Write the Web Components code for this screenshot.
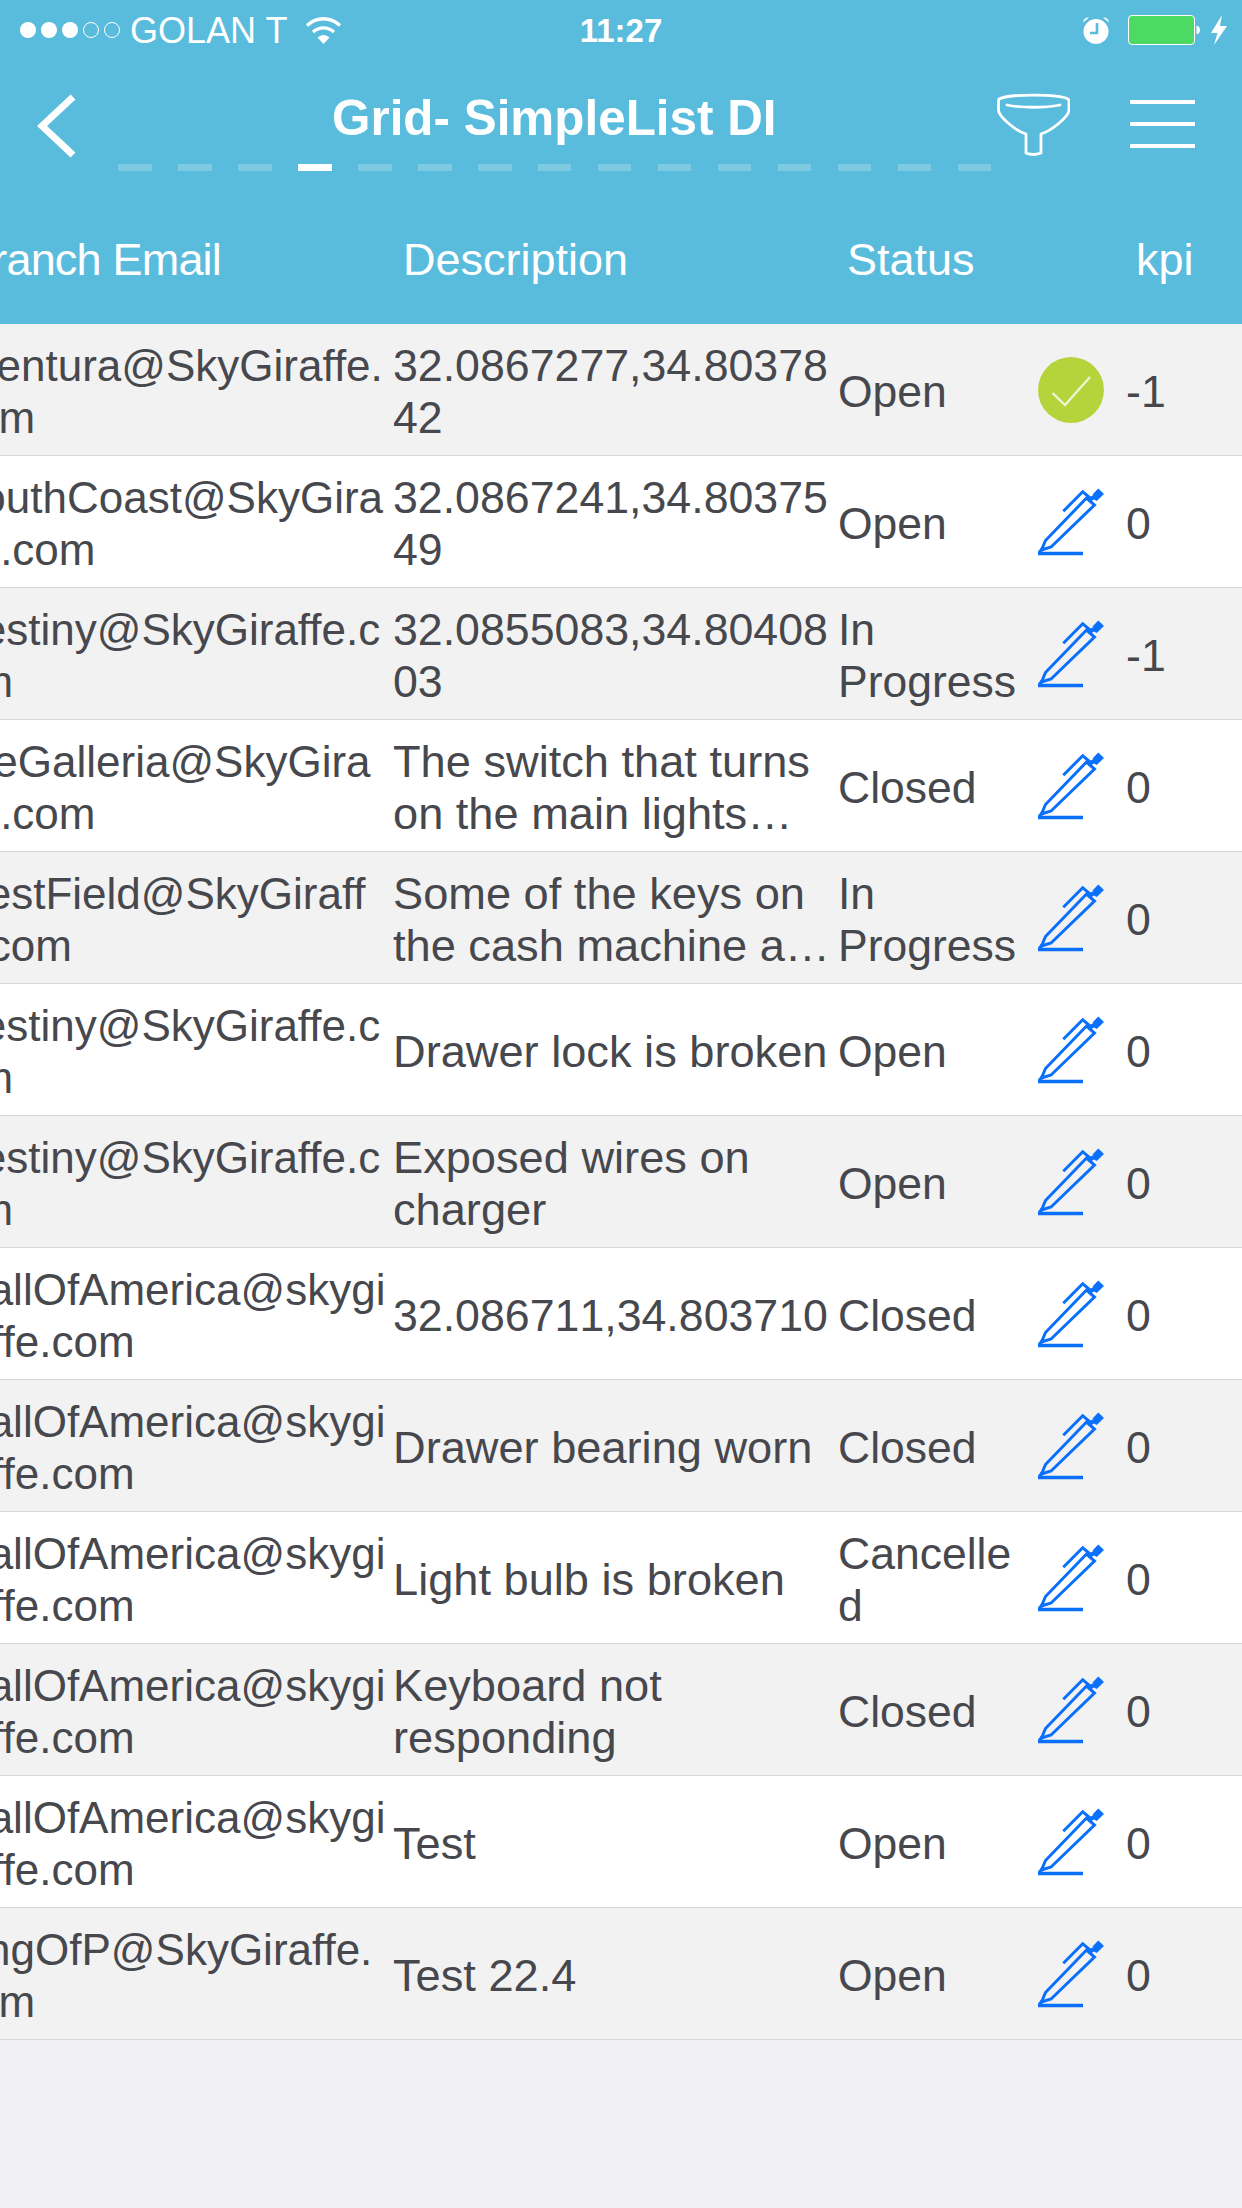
<!DOCTYPE html>
<html>
<head>
<meta charset="utf-8">
<title>Grid- SimpleList DI</title>
<style>
  html, body { margin: 0; padding: 0; background: #efeff4; }
  body { width: 1242px; height: 2208px; overflow: hidden; font-family: "Liberation Sans", Arial, sans-serif; }
  .num { font-size: 44.7px; font-kerning: none; }
</style>
</head>
<body>
<grid-screen>
  <status-bar></status-bar>
  <nav-bar title="Grid- SimpleList DI"></nav-bar>
  <page-dashes count="15" active="3"></page-dashes>
  <grid-head></grid-head>

  <grid-row kpi="-1" done>
    <span slot="email" style="margin-left:-6px">Aventura@SkyGiraffe.<br>com</span>
    <span slot="desc" class="num">32.0867277,34.80378<br>42</span>
    <span slot="status">Open</span>
  </grid-row>
  <grid-row kpi="0">
    <span slot="email">SouthCoast@SkyGira<br>ffe.com</span>
    <span slot="desc" class="num">32.0867241,34.80375<br>49</span>
    <span slot="status">Open</span>
  </grid-row>
  <grid-row kpi="-1">
    <span slot="email" style="margin-left:-2px">Destiny@SkyGiraffe.c<br>om</span>
    <span slot="desc" class="num">32.0855083,34.80408<br>03</span>
    <span slot="status">In<br>Progress</span>
  </grid-row>
  <grid-row kpi="0">
    <span slot="email" style="margin-left:-10px">TheGalleria@SkyGira<br>ffe.com</span>
    <span slot="desc">The switch that turns<br>on the main lights…</span>
    <span slot="status">Closed</span>
  </grid-row>
  <grid-row kpi="0">
    <span slot="email" style="margin-left:-6px">WestField@SkyGiraff<br>e.com</span>
    <span slot="desc">Some of the keys on<br>the cash machine a…</span>
    <span slot="status">In<br>Progress</span>
  </grid-row>
  <grid-row kpi="0">
    <span slot="email" style="margin-left:-2px">Destiny@SkyGiraffe.c<br>om</span>
    <span slot="desc">Drawer lock is broken</span>
    <span slot="status">Open</span>
  </grid-row>
  <grid-row kpi="0">
    <span slot="email" style="margin-left:-2px">Destiny@SkyGiraffe.c<br>om</span>
    <span slot="desc">Exposed wires on<br>charger</span>
    <span slot="status">Open</span>
  </grid-row>
  <grid-row kpi="0">
    <span slot="email">MallOfAmerica@skygi<br>raffe.com</span>
    <span slot="desc" class="num">32.086711,34.803710</span>
    <span slot="status">Closed</span>
  </grid-row>
  <grid-row kpi="0">
    <span slot="email">MallOfAmerica@skygi<br>raffe.com</span>
    <span slot="desc">Drawer bearing worn</span>
    <span slot="status">Closed</span>
  </grid-row>
  <grid-row kpi="0">
    <span slot="email">MallOfAmerica@skygi<br>raffe.com</span>
    <span slot="desc">Light bulb is broken</span>
    <span slot="status">Cancelle<br>d</span>
  </grid-row>
  <grid-row kpi="0">
    <span slot="email">MallOfAmerica@skygi<br>raffe.com</span>
    <span slot="desc">Keyboard not<br>responding</span>
    <span slot="status">Closed</span>
  </grid-row>
  <grid-row kpi="0">
    <span slot="email">MallOfAmerica@skygi<br>raffe.com</span>
    <span slot="desc">Test</span>
    <span slot="status">Open</span>
  </grid-row>
  <grid-row kpi="0">
    <span slot="email" style="margin-left:-5px">KingOfP@SkyGiraffe.<br>com</span>
    <span slot="desc">Test 22.4</span>
    <span slot="status">Open</span>
  </grid-row>
</grid-screen>

<script>
class GridScreen extends HTMLElement {
    constructor() {
        super();
        this.shadowDOM = this.attachShadow({mode: "open"});
    }

    connectedCallback(){
        this.shadowDOM.innerHTML = `
        <style>
        :host {
            display: flex;
            flex-direction: column;
            width: 1242px;
            height: 2208px;
            overflow: hidden;
            background-color: #efeff4;
            color: #47484d;
            font-family: "Liberation Sans", Arial, sans-serif;
        }
        </style>
        <slot></slot>
        `;
    }
}

class StatusBar extends HTMLElement {
    constructor() {
        super();
        this.shadowDOM = this.attachShadow({mode: "open"});
    }

    connectedCallback(){
        this.shadowDOM.innerHTML = `
        <style>
        :host {
            display: grid;
            grid-template-columns: 1fr auto 1fr;
            align-items: center;
            height: 60px;
            background-color: #5abcdc;
            color: white;
            font-size: 36px;
        }
        .left, .right { display: flex; align-items: center; }
        .left { padding-left: 20px; }
        .right { justify-content: flex-end; padding-right: 15px; }
        .dots { display: flex; gap: 5px; margin-right: 10px; }
        .dots i { width: 16px; height: 16px; border-radius: 50%; background: white; box-sizing: border-box; }
        .dots i.off { background: none; border: 1px solid white; }
        .carrier { margin-right: 18px; padding-top: 2px; }
        .time { font-weight: bold; font-size: 33px; padding-top: 1px; }
        svg { display: block; }
        </style>
        <div class="left">
            <div class="dots"><i></i><i></i><i></i><i class="off"></i><i class="off"></i></div>
            <span class="carrier">GOLAN T</span>
            <svg width="37" height="28" viewBox="0 0 37 28">
                <path d="M2 9.500C12 .5 25 .5 35 9.500" fill="none" stroke="white" stroke-width="3.400"/>
                <path d="M8 16C14.500 10.500 22.500 10.500 29 16" fill="none" stroke="white" stroke-width="3.400"/>
                <path d="M12.500 21.500C16.500 18 20.500 18 24.500 21.500L18.500 28Z" fill="white"/>
            </svg>
        </div>
        <div class="time">11:27</div>
        <div class="right">
            <svg width="28" height="28" viewBox="0 0 28 28" style="margin-right:18px">
                <circle cx="14" cy="15.500" r="12.500" fill="white"/>
                <path d="M1 6.500C1.500 3 4 1 7 1.500ZM27 6.500C26.500 3 24 1 21 1.500Z" fill="white"/>
                <path d="M15 7V17H8" fill="none" stroke="#5abcdc" stroke-width="2.600"/>
            </svg>
            <svg width="73" height="30" viewBox="0 0 73 30" style="margin-right:10px">
                <rect x=".5" y=".5" width="66" height="29" rx="3.500" fill="#4cd964" stroke="white"/>
                <path d="M68.500 10.500C71 11 72 13 72 15S71 19 68.500 19.500Z" fill="white"/>
            </svg>
            <svg width="16" height="30" viewBox="0 0 16 30">
                <path d="M11 0L0 18H6.500L3 30L16 11H9Z" fill="white"/>
            </svg>
        </div>
        `;
    }
}

class NavBar extends HTMLElement {
    constructor() {
        super();
        this.shadowDOM = this.attachShadow({mode: "open"});
    }

    connectedCallback(){
        this.shadowDOM.innerHTML = `
        <style>
        :host {
            display: flex;
            align-items: center;
            box-sizing: border-box;
            height: 100px;
            padding: 32px 0 0 37px;
            background-color: #5abcdc;
            color: white;
        }
        svg { display: block; flex: none; }
        h1 {
            flex: 1;
            margin: 0 0 16px 255px;
            font-size: 49.400px;
            line-height: 60px;
            font-weight: bold;
            white-space: nowrap;
        }
        .filter { margin: 0 60px 4px 0; }
        .menu { margin: 0 47px 4px 0; display: flex; flex-direction: column; gap: 18px; }
        .menu i { display: block; width: 65px; height: 4px; background: white; }
        </style>
        <svg width="40" height="64" viewBox="0 0 40 64">
            <path d="M36 3L5 32L36 61" fill="none" stroke="white" stroke-width="7"/>
        </svg>
        <h1>${this.getAttribute("title")}</h1>
        <svg class="filter" width="73" height="63" viewBox="0 0 73 63">
            <path d="M2 6C12 .8 61 .8 71 6Q72 7 72 9V17C72 23 56 37 44 41V60Q36 63 29 60V41C17 37 1.500 23 1.500 17V9Q1.500 7 2 6Z" fill="none" stroke="white" stroke-width="2.800" stroke-linejoin="round"/>
            <path d="M10 12C24 15 48 15 63 12" fill="none" stroke="white" stroke-width="2.800" stroke-linecap="round"/>
        </svg>
        <div class="menu"><i></i><i></i><i></i></div>
        `;
    }
}

class PageDashes extends HTMLElement {
    constructor() {
        super();
        this.shadowDOM = this.attachShadow({mode: "open"});
    }

    connectedCallback(){
        const count = Number(this.getAttribute("count"));
        const active = Number(this.getAttribute("active"));
        let dashes = "";
        for (let i = 0; i < count; i++) {
            dashes += `<i class="${i === active ? "on" : ""}"></i>`;
        }
        this.shadowDOM.innerHTML = `
        <style>
        :host {
            display: flex;
            gap: 26.400px;
            padding: 4px 0 0 118px;
            background-color: #5abcdc;
        }
        i { display: block; width: 33.600px; height: 7px; background: rgba(255,255,255,.22); }
        i.on { background: white; }
        </style>
        ${dashes}
        `;
    }
}

class GridHead extends HTMLElement {
    constructor() {
        super();
        this.shadowDOM = this.attachShadow({mode: "open"});
    }

    connectedCallback(){
        this.shadowDOM.innerHTML = `
        <style>
        :host {
            display: block;
            overflow: hidden;
            background-color: #5abcdc;
            color: white;
        }
        .cols {
            display: grid;
            grid-template-columns: 448px 444px 289px auto;
            box-sizing: border-box;
            margin-left: -45px;
            height: 153px;
            padding-top: 25px;
            align-items: center;
            font-size: 45px;
            white-space: nowrap;
        }
        .branch { letter-spacing: -.8px; padding-left: 8px; }
        </style>
        <div class="cols">
            <div class="branch">Branch Email</div>
            <div>Description</div>
            <div>Status</div>
            <div>kpi</div>
        </div>
        `;
    }
}

class GridRow extends HTMLElement {
    constructor() {
        super();
        this.shadowDOM = this.attachShadow({mode: "open"});
    }

    connectedCallback(){
        const icon = this.hasAttribute("done") ? `
            <svg width="66" height="66" viewBox="0 0 66 66">
                <circle cx="33" cy="33" r="33" fill="#b5d43b"/>
                <path d="M14.500 36L27 48L52 20" fill="none" stroke="#eef5d0" stroke-width="2.400"/>
            </svg>` : `
            <svg width="66" height="68" viewBox="0 0 66 68">
                <g fill="none" stroke="#0a6ffb" stroke-width="3">
                    <path d="M0 65.500H45" stroke-width="3.400"/>
                    <path d="M3.500 62L7.500 52.500L48.500 10L56.500 17L13 59Z"/>
                    <path d="M25.300 23.300L44.700 3.700L52 10"/>
                    <path d="M0 66L4 61"/>
                </g>
                <path d="M60.300 .5L66 6L58.700 13L56 11.500L52 14L50 10L55.500 7L54.500 6.500Z" fill="#0a6ffb"/>
            </svg>`;
        this.shadowDOM.innerHTML = `
        <style>
        :host {
            display: block;
            overflow: hidden;
            box-sizing: border-box;
            height: 132px;
            background-color: white;
            border-bottom: 1px solid #d8d8d8;
        }
        :host(:nth-of-type(odd)) { background-color: #f2f2f2; }
        .cols {
            display: grid;
            grid-template-columns: 433px 445px 198px 98px auto;
            margin-left: -48px;
            height: 131px;
            align-items: center;
            font-size: 44.700px;
            line-height: 52px;
            white-space: nowrap;
        }
        .cols > div { padding-top: 4px; }
        .email { font-size: 44px; }
        .desc { font-size: 45.200px; padding-left: 8px; }
        .status { font-size: 44.500px; padding-left: 8px; }
        .cols > .icon { padding: 1px 0 0 10px; }
        svg { display: block; }
        </style>
        <div class="cols">
            <div class="email"><slot name="email"></slot></div>
            <div class="desc"><slot name="desc"></slot></div>
            <div class="status"><slot name="status"></slot></div>
            <div class="icon">${icon}</div>
            <div class="kpi">${this.getAttribute("kpi")}</div>
        </div>
        `;
    }
}

customElements.define("grid-screen", GridScreen);
customElements.define("status-bar", StatusBar);
customElements.define("nav-bar", NavBar);
customElements.define("page-dashes", PageDashes);
customElements.define("grid-head", GridHead);
customElements.define("grid-row", GridRow);
</script>
</body>
</html>
